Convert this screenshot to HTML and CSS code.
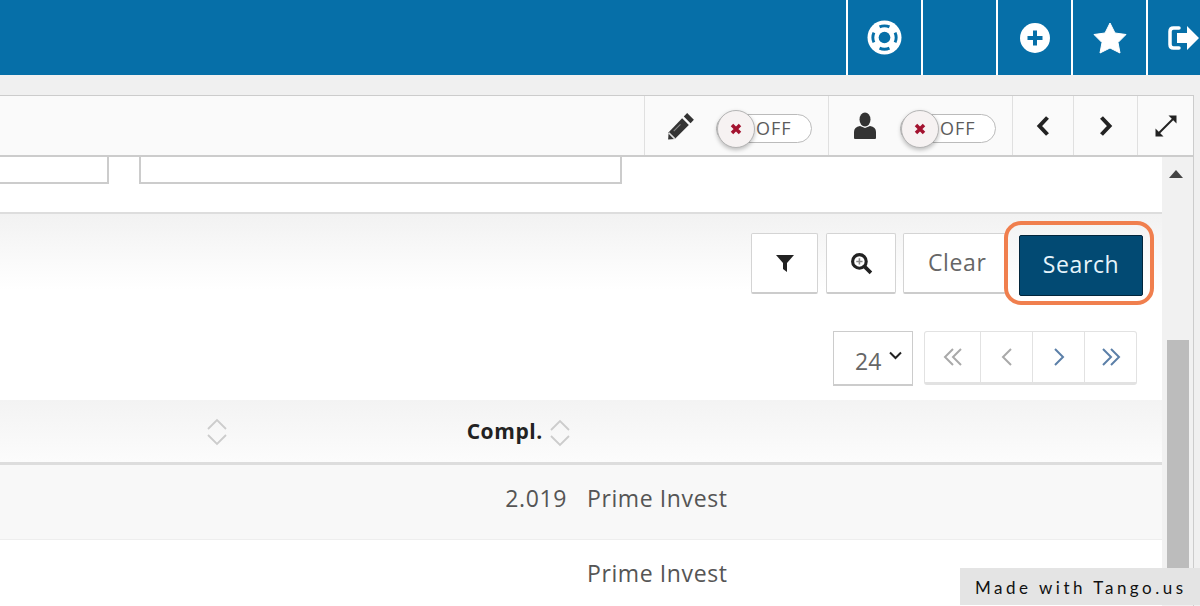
FILE: index.html
```html
<!DOCTYPE html>
<html lang="en">
<head>
    <meta charset="UTF-8">
    <title>Search</title>
    <link rel="stylesheet" href="styles.css">
</head>
<body>

    <header class="topbar">
        <div class="tile">
            <svg width="35" height="35" viewBox="0 0 36 36">
                <circle cx="18" cy="18" r="17.500" fill="#fff"/>
                <circle cx="18" cy="18" r="12" fill="none" stroke="#066fa8" stroke-width="3" pathLength="100" stroke-dasharray="14 11" stroke-dashoffset="7"/>
                <circle cx="18" cy="18" r="6" fill="#066fa8"/>
            </svg>
        </div>
        <div class="tile"></div>
        <div class="tile">
            <svg width="30" height="30" viewBox="0 0 30 30">
                <circle cx="15" cy="15" r="15" fill="#fff"/>
                <path d="M15 7.500v15M7.500 15h15" stroke="#066fa8" stroke-width="4"/>
            </svg>
        </div>
        <div class="tile">
            <svg width="34" height="32" viewBox="0 0 34 32">
                <polygon points="17,1 22,11 33,12.500 25,20.500 27,31 17,26 7,31 9,20.500 1,12.500 12,11" fill="#fff" stroke="#fff" stroke-linejoin="round"/>
            </svg>
        </div>
        <div class="tile tile-last">
            <svg width="31" height="26" viewBox="0 0 31 26">
                <path d="M11 3H5.500Q2 3 2 6.500v13Q2 23 5.500 23H11" fill="none" stroke="#fff" stroke-width="3.500" stroke-linecap="round"/>
                <path d="M19 1l12 12-12 12v-7H9V8h10z" fill="#fff"/>
            </svg>
        </div>
    </header>

    <div class="panel">
        <div class="toolbar">
            <div class="tool tool-toggle">
                <span class="tool-icon">
                    <svg width="28" height="28" viewBox="2 1 25 25">
                        <path d="M20 2l6 6-3 3-6-6z" fill="#333"/>
                        <path d="M15.500 6.500l6 6L9 25l-6 0.500 0.500-6.500z" fill="#333"/>
                        <path d="M3.500 19.500l5.500 5.500" stroke="#ddd" stroke-width="1.500"/>
                        <path d="M14 12l-6 6" stroke="#888" stroke-width="1"/>
                    </svg>
                </span>
                <span class="switch"><span class="knob"><svg width="12" height="12" viewBox="0 0 12 12"><path d="M2 2l8 8M10 2l-8 8" stroke="#a3122f" stroke-width="3.500"/></svg></span>OFF</span>
            </div>
            <div class="tool tool-toggle">
                <span class="tool-icon">
                    <svg width="24" height="28" viewBox="0 0 24 28">
                        <ellipse cx="12" cy="7.500" rx="5.500" ry="7" fill="#333"/>
                        <path d="M1 26v-6q0-5 6-6l5 2 5-2q6 1 6 6v6q0 1-1 1H2q-1 0-1-1z" fill="#333"/>
                    </svg>
                </span>
                <span class="switch"><span class="knob"><svg width="12" height="12" viewBox="0 0 12 12"><path d="M2 2l8 8M10 2l-8 8" stroke="#a3122f" stroke-width="3.500"/></svg></span>OFF</span>
            </div>
            <div class="tool tool-prev">
                <svg width="14" height="22" viewBox="0 0 14 22"><path d="M11.500 2.500L3.500 11l8 8.500" fill="none" stroke="#222" stroke-width="4"/></svg>
            </div>
            <div class="tool tool-next">
                <svg width="14" height="22" viewBox="0 0 14 22"><path d="M2.500 2.500l8 8.500-8 8.500" fill="none" stroke="#222" stroke-width="4"/></svg>
            </div>
            <div class="tool tool-expand">
                <svg width="24" height="24" viewBox="0 0 24 24">
                    <path d="M5 19L19 5" stroke="#222" stroke-width="2"/>
                    <path d="M14.500 1.500h8V9.500zM1.500 14.500v8H9.500z" fill="#222"/>
                </svg>
            </div>
        </div>

        <div class="panel-body">
            <div class="main">
                <div class="filters">
                    <div class="box box-short"></div>
                    <div class="box box-long"></div>
                </div>

                <div class="actions">
                    <button class="btn btn-icon" type="button">
                        <svg width="18" height="18" viewBox="0 0 18 18"><path d="M0 1h18l-7 8v9l-4-3V9z" fill="#222"/></svg>
                    </button>
                    <button class="btn btn-icon btn-lens" type="button">
                        <svg width="23" height="23" viewBox="0 0 22 22">
                            <circle cx="9" cy="9" r="6.500" fill="none" stroke="#222" stroke-width="3"/>
                            <path d="M14 14l6 6" stroke="#222" stroke-width="3.500"/>
                            <path d="M9 6v6M6 9h6" stroke="#888" stroke-width="1.500"/>
                        </svg>
                    </button>
                    <button class="btn btn-clear" type="button">Clear</button>
                    <div class="search-wrap">
                        <button class="btn-search" type="button">Search</button>
                        <span class="ring"></span>
                    </div>
                </div>

                <div class="paging">
                    <div class="page-size">24
                        <svg width="15" height="9" viewBox="0 0 15 9"><path d="M2 1.500l5.500 5.500L13 1.500" fill="none" stroke="#222" stroke-width="2"/></svg>
                    </div>
                    <div class="pager">
                        <span class="pager-item"><svg width="20" height="18" viewBox="0 0 20 18"><path d="M10 1L2 9l8 8M18 1l-8 8 8 8" fill="none" stroke="#a9a9a9" stroke-width="2"/></svg></span>
                        <span class="pager-item"><svg width="12" height="18" viewBox="0 0 12 18"><path d="M10 1L2 9l8 8" fill="none" stroke="#a9a9a9" stroke-width="2"/></svg></span>
                        <span class="pager-item"><svg width="12" height="18" viewBox="0 0 12 18"><path d="M2 1l8 8-8 8" fill="none" stroke="#5b7fa8" stroke-width="2"/></svg></span>
                        <span class="pager-item"><svg width="20" height="18" viewBox="0 0 20 18"><path d="M2 1l8 8-8 8M10 1l8 8-8 8" fill="none" stroke="#5b7fa8" stroke-width="2"/></svg></span>
                    </div>
                </div>

                <table class="results">
                    <colgroup>
                        <col class="col-first">
                        <col class="col-compl">
                        <col>
                    </colgroup>
                    <thead>
                        <tr>
                            <th class="th-first">
                                <svg class="sort" width="22" height="28" viewBox="0 0 22 28"><path d="M2 11l9-9 9 9M2 17l9 9 9-9" fill="none" stroke="#ccc" stroke-width="1.800"/></svg>
                            </th>
                            <th class="th-compl">Compl.
                                <svg class="sort" width="22" height="28" viewBox="0 0 22 28"><path d="M2 11l9-9 9 9M2 17l9 9 9-9" fill="none" stroke="#ccc" stroke-width="1.800"/></svg>
                            </th>
                            <th></th>
                        </tr>
                    </thead>
                    <tbody>
                        <tr class="odd">
                            <td></td>
                            <td class="num">2.019</td>
                            <td class="name">Prime Invest</td>
                        </tr>
                        <tr>
                            <td></td>
                            <td class="num"></td>
                            <td class="name">Prime Invest</td>
                        </tr>
                    </tbody>
                </table>
            </div>

            <div class="scrollbar">
                <svg class="scroll-up" width="14" height="8" viewBox="0 0 14 8"><path d="M7 0l7 8H0z" fill="#444"/></svg>
                <div class="scroll-thumb"></div>
            </div>
        </div>
    </div>

    <div class="badge">Made with Tango.us</div>

</body>
</html>
```

FILE: styles.css
```css
html, body {
    height: 606px;
}

body {
    font-family: 'Open Sans', sans-serif;
    background-color: #f0f0f0;
    margin: 0;
    overflow: hidden;
    position: relative;
}

.topbar {
    height: 75px;
    background-color: #066fa8;
    display: flex;
    justify-content: flex-end;
}

.tile {
    width: 73px;
    border-left: 2px solid #fff;
    display: flex;
    align-items: center;
    justify-content: center;
}

.tile-last {
    width: 54px;
    justify-content: flex-start;
    padding-left: 20px;
    box-sizing: border-box;
    overflow: hidden;
}

.panel {
    margin-top: 20px;
    margin-right: 6px;
    border-right: 1px solid #ccc;
    height: 511px;
}

.toolbar {
    height: 59px;
    background-color: #fafafa;
    border-top: 1px solid #ccc;
    border-bottom: 2px solid #ccc;
    display: flex;
    justify-content: flex-end;
}

.tool {
    border-left: 1px solid #e0e0e0;
    display: flex;
    align-items: center;
    justify-content: center;
    box-sizing: border-box;
}

.tool-toggle {
    width: 184px;
    justify-content: flex-start;
    padding-left: 22px;
}

.tool-prev {
    width: 61px;
}

.tool-next {
    width: 64px;
}

.tool-expand {
    width: 56px;
}

.tool-icon {
    width: 28px;
    margin-right: 21px;
    display: flex;
    justify-content: center;
}

.switch {
    position: relative;
    width: 96px;
    height: 29px;
    margin-top: 5px;
    box-sizing: border-box;
    border: 1.5px solid #bbb;
    border-radius: 15px;
    background-color: #fff;
    color: #5c5c5c;
    font-size: 18px;
    letter-spacing: 1px;
    line-height: 26px;
    padding-left: 39px;
}

.knob {
    position: absolute;
    left: 0;
    top: -5px;
    width: 38px;
    height: 38px;
    box-sizing: border-box;
    border: 1.5px solid #b5b5b5;
    border-radius: 50%;
    background-color: #f6f2f2;
    box-shadow: 0 2px 4px rgba(0, 0, 0, 0.25);
    display: flex;
    align-items: center;
    justify-content: center;
}

.panel-body {
    display: flex;
    height: 450px;
    overflow: hidden;
}

.main {
    width: 1162px;
    background-color: #fff;
}

.filters {
    height: 55px;
    display: flex;
    gap: 30px;
    border-bottom: 2px solid #ddd;
}

.box {
    height: 27px;
    box-sizing: border-box;
    border-bottom: 2px solid #ccc;
}

.box-short {
    width: 109px;
    border-right: 2px solid #ccc;
}

.box-long {
    width: 483px;
    border-left: 2px solid #ccc;
    border-right: 2px solid #ccc;
}

.actions {
    height: 117px;
    box-sizing: border-box;
    padding: 19px 19px 0 0;
    display: flex;
    justify-content: flex-end;
    align-items: flex-start;
    background: linear-gradient(#f2f2f2, #fff 76px);
}

.btn {
    height: 61px;
    box-sizing: border-box;
    background-color: #fff;
    border: 1px solid #d4d4d4;
    border-bottom: 2px solid #ccc;
    border-radius: 2px;
    font-family: inherit;
    padding: 0;
}

.btn-icon {
    width: 67px;
    margin-right: 8px;
    display: flex;
    align-items: center;
    justify-content: center;
}

.btn-lens {
    width: 70px;
    margin-right: 7px;
}

.btn-clear {
    width: 103px;
    color: #666;
    font-size: 23px;
    letter-spacing: 0.6px;
    text-align: left;
    padding-left: 24px;
    padding-bottom: 2px;
}

.search-wrap {
    position: relative;
    margin: 2px 0 0 13px;
}

.btn-search {
    display: block;
    width: 124px;
    height: 61px;
    background-color: #024a73;
    border: 1px solid #02263c;
    border-radius: 2px;
    color: #e6f4fb;
    font-family: inherit;
    font-size: 23px;
    letter-spacing: 0.6px;
    padding: 0 0 3px;
}

.ring {
    position: absolute;
    left: -15px;
    top: -14px;
    width: 150px;
    height: 84px;
    box-sizing: border-box;
    border: 4px solid #f07f4e;
    border-radius: 17px;
}

.paging {
    height: 55px;
    margin-bottom: 14px;
    padding-right: 25px;
    display: flex;
    justify-content: flex-end;
    gap: 11px;
}

.page-size {
    width: 80px;
    box-sizing: border-box;
    border: 1px solid #ccc;
    border-bottom-width: 2px;
    color: #666;
    font-size: 23px;
    line-height: 58px;
    padding-left: 21px;
    position: relative;
}

.page-size svg {
    position: absolute;
    left: 54px;
    top: 19px;
}

.pager {
    width: 213px;
    height: 54px;
    box-sizing: border-box;
    display: flex;
    border: 1px solid #e2e2e2;
    border-bottom: 3px solid #e2e2e2;
    border-radius: 3px;
}

.pager-item {
    width: 51px;
    border-left: 1px solid #e2e2e2;
    display: flex;
    align-items: center;
    justify-content: center;
}

.pager-item:first-child {
    width: 55px;
    border-left: none;
}

.pager-item:last-child {
    flex: 1;
}

.results {
    width: 100%;
    table-layout: fixed;
    border-collapse: collapse;
}

.col-first {
    width: 238px;
}

.col-compl {
    width: 339px;
}

.results th {
    height: 63px;
    box-sizing: border-box;
    padding: 0;
    background: linear-gradient(#f3f3f3, #fcfcfc);
    border-bottom: 3px solid #ddd;
    color: #222;
    font-size: 21px;
    letter-spacing: 0.6px;
    text-align: right;
    white-space: nowrap;
}

.sort {
    vertical-align: middle;
}

.th-first {
    padding-right: 10px !important;
}

.th-compl {
    padding: 2px 6px 0 0 !important;
}

.results td {
    height: 76px;
    padding: 0 0 8px;
    box-sizing: border-box;
    color: #555;
    font-size: 23px;
    letter-spacing: 0.6px;
    border-bottom: 1px solid #eee;
}

.odd td {
    background-color: #f8f8f8;
}

.results .num {
    text-align: right;
    padding-right: 10px;
}

.results .name {
    padding-left: 10px;
}

.scrollbar {
    width: 31px;
    background-color: #f1f1f1;
    position: relative;
}

.scroll-up {
    display: block;
    margin: 13px 0 0 7px;
}

.scroll-thumb {
    width: 22px;
    height: 240px;
    margin: 162px 0 0 5px;
    background-color: #bcbcbc;
}

.badge {
    position: absolute;
    right: 0;
    bottom: 1px;
    width: 240px;
    height: 37px;
    box-sizing: border-box;
    background-color: #e4e4e4;
    color: #111;
    font-family: 'Lato', sans-serif;
    font-size: 17px;
    letter-spacing: 3.5px;
    line-height: 39px;
    padding-left: 15px;
    white-space: nowrap;
}
```
